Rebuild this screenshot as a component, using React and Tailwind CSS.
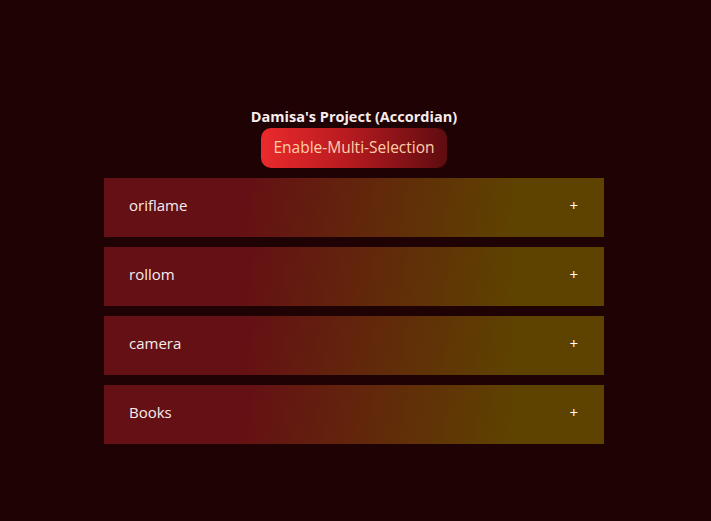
import React, { useState } from "react";

const items = ["oriflame", "rollom", "camera", "Books"];

export default function App() {
  const [open, setOpen] = useState([]);
  return (
    <div className="min-h-[521px] w-full bg-[#1e0204] font-['Open_Sans','Noto_Sans',sans-serif]">
      <div className="flex w-[708px] flex-col items-center pt-[107px]">
        <h1 className="text-[14.5px] font-bold text-[#f7ecec] leading-[19px]">Damisa's Project (Accordian)</h1>
        <button className="mt-[2px] h-[40px] w-[186px] rounded-[10px] bg-[linear-gradient(90deg,#ea2a2c_0%,#b91b20_45%,#5e0c10_100%)] text-[15.5px] text-[#ffcfa6] leading-none">
          Enable-Multi-Selection
        </button>
        <div className="mt-[10px] flex w-[500px] flex-col gap-[10px]">
          {items.map((t, i) => (
            <div key={t}>
              <div
                className="flex h-[59px] cursor-pointer items-center justify-between bg-[linear-gradient(100deg,#651014_28%,#5e4300_82%)] pb-[4px] pl-[25px] pr-[26px] text-[15px] text-[#f8ecec]"
                onClick={() => setOpen(open.includes(i) ? open.filter((x) => x !== i) : [...open, i])}
              >
                <span>{t}</span>
                <span className="text-[15px] font-normal text-white">+</span>
              </div>
            </div>
          ))}
        </div>
      </div>
    </div>
  );
}
